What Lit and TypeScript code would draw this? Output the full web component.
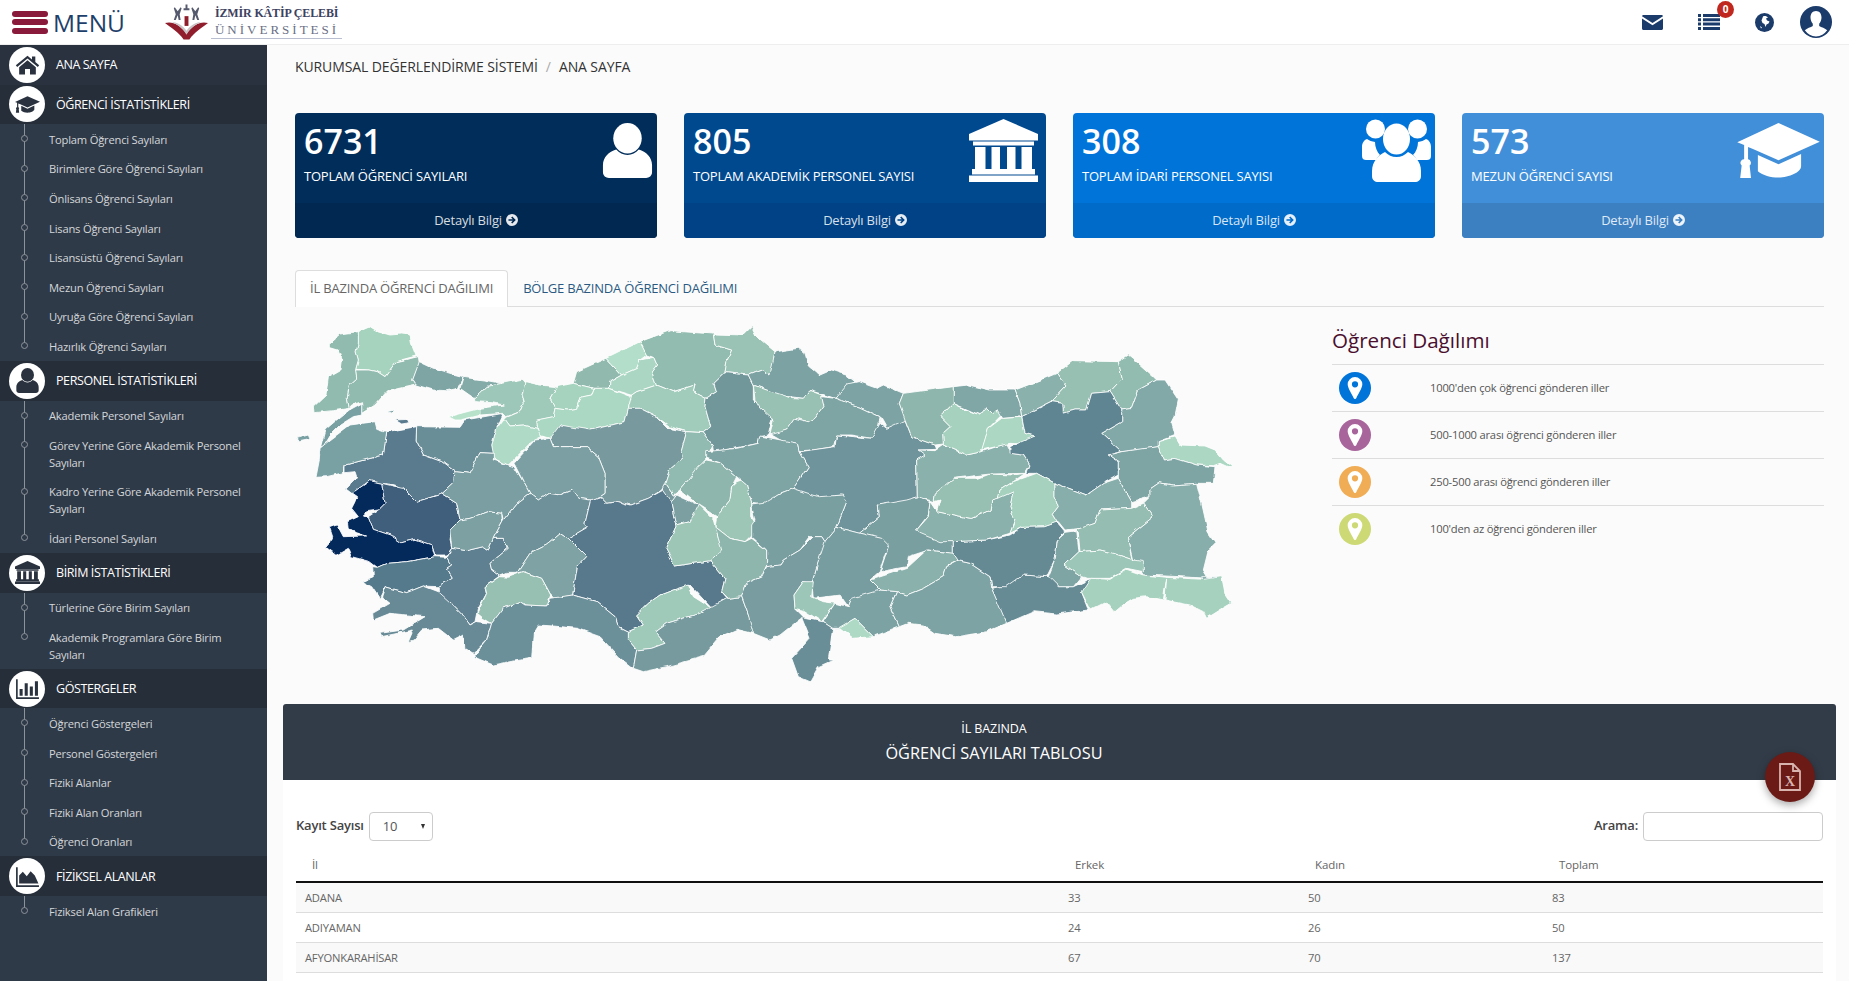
import { LitElement, css, html, svg } from "lit";
import { customElement } from "lit/decorators.js";

// icons, drawn for this page
const icons: Record<string, any> = {
  home: svg`<svg viewBox="0 0 24 24" class="ico"><path d="M12 3.5L.8 12.8l1.3 1.5L12 6.2l9.9 8.1 1.3-1.5-3.7-3.1V4.2h-3.2v2.9z"/><path d="M12 8L4 14.6V21.5h5.6v-5.3h4.8v5.3H20v-6.9z"/></svg>`,
  cap: svg`<svg viewBox="0 0 84 56" class="ico"><path d="M42 0L84 19 42 38 16 26.5 11 24.5V37a3.6 3.6 0 0 1 1.6 6.3L14 56H3l1.500-12.700A3.600 3.600 0 0 1 7 37V22.500L0 19.500z"/><path d="M21 32.500L42 42l23-10.500V44c0 6-12 11.500-23 11.500-8 0-16-2.500-21-6.500z"/></svg>`,
  user: svg`<svg viewBox="0 0 50 56" class="ico"><ellipse cx="25" cy="15.500" rx="14.500" ry="15.500"/><path d="M13.500 27C6 29 0 35 0 43v7c0 4 3 6 6 6h38c3 0 6-2 6-6v-7c0-8-6-14-13.500-16-3 3.500-7 5.500-11.500 5.500S16.500 30.500 13.500 27z"/></svg>`,
  bank: svg`<svg viewBox="0 0 69 63" class="ico"><path d="M34.500 0L69 15v6.500H0V15z"/><path d="M4 22.500h61v4H4zM6 28h10.500v24H6zM22.500 28h8.500v24h-8.500zM38 28h8.500v24H38zM52.500 28H63v24H52.500zM3 50h63v5.500H3zM0 56.500h69V63H0z"/></svg>`,
  group: svg`<svg viewBox="0 0 69 63" class="ico"><circle cx="13.500" cy="10" r="9.500"/><circle cx="55.500" cy="10" r="9.500"/><path d="M5 20c-3 1-5 4-5 8v9c0 3 2 4 4 4h10c2-3 3-4 4-5-3-3-5-8-5-13-3-.5-6-1.500-8-3zM64 20c3 1 5 4 5 8v9c0 3-2 4-4 4H55c-2-3-3-4-4-5 3-3 5-8 5-13 3-.5 6-1.500 8-3z"/><ellipse cx="34.500" cy="20" rx="13.500" ry="15.500"/><path d="M23 33c-6 3-13 9-13 19v5c0 4 3 6 6 6h37c3 0 6-2 6-6v-5c0-10-7-16-13-19-3 3-7 5-11.500 5S26 36 23 33z"/></svg>`,
  chart: svg`<svg viewBox="0 0 24 24" class="ico"><path d="M1 3h1.600v17.400H23V22H1z"/><path d="M5 12.500h3V19H5zM10 7h3v12h-3zM15 10h3v9h-3zM20 5h3v14h-3z" transform="translate(-.5 0) scale(.98 1)"/></svg>`,
  area: svg`<svg viewBox="0 0 24 24" class="ico"><path d="M1 3h1.600v17.400H23V22H1z"/><path d="M4 18.800V11l3.500-3.500 3.800 4.200L15 7l4 4 3.500 7.800z"/></svg>`,
  arrow: svg`<svg viewBox="0 0 14 14" class="arrow"><path fill-rule="evenodd" d="M7 0a7 7 0 1 0 0 14A7 7 0 0 0 7 0zM7.300 2.900l4.100 4.100-4.100 4.100-1.300-1.300 1.900-1.900H2.900V6.100h5L6 4.200z"/></svg>`,
  pin: svg`<svg viewBox="0 0 16 24" class="pin"><path fill-rule="evenodd" d="M8 0a8 8 0 0 0-8 8c0 4.500 5 11 6.500 15a1.600 1.600 0 0 0 3 0C11 19 16 12.500 16 8a8 8 0 0 0-8-8zm0 4.600A3.400 3.400 0 1 1 8 11.400 3.400 3.400 0 0 1 8 4.600z"/></svg>`,
};

interface Prov { f: string; p: string }

// western half, traced in a 3x grid of the map area
const west: Prov[] = [
  { f: "#789a9f", p: "1115,500 1125,490 1150,525 1160,525 1145,548 1120,512" },
  { f: "#a6d3be", p: "205,35 240,20 265,35 300,45 335,42 360,45 365,75 378,108 340,118 318,125 300,150 285,170 262,155 240,150 197,148 205,120 198,95 205,70" },
  { f: "#92bbaf", p: "118,70 150,42 205,35 205,70 198,95 205,120 197,148 200,175 178,195 172,235 178,265 130,272 75,278 73,258 108,225 115,170 150,150 155,115 145,90 118,82" },
  { f: "#92bbaf", p: "197,150 240,150 262,155 285,170 300,150 318,125 385,110 388,130 368,180 378,195 330,205 290,215 255,255 215,280 215,245 185,255 178,265 172,235 178,195 200,175" },
  { f: "#79a0a3", p: "215,250 215,285 190,290 150,315 120,345 100,378 92,380 105,330 140,300 178,270" },
  { f: "#7ea4a4", p: "388,125 430,145 480,160 520,170 505,205 470,212 430,210 378,195 368,180" },
  { f: "#84aba8", p: "520,172 580,180 635,190 590,200 570,220 553,235 510,205" },
  { f: "#b9e2cb", p: "475,290 570,265 570,285 510,300 495,300" },
  { f: "#9dc7b8", p: "553,235 570,220 590,200 635,190 695,178 705,190 695,230 700,250 690,275 650,290 640,280 570,285 570,265 640,255 610,248 555,245" },
  { f: "#9fc9b9", p: "705,185 750,195 800,200 780,235 795,265 790,290 745,300 740,325 700,315 660,318 643,295 690,275 700,250 695,230" },
  { f: "#91b9ad", p: "850,190 860,155 948,115 995,165 960,185 958,205 912,205" },
  { f: "#a6d3be", p: "800,200 850,190 912,205 905,225 870,232 860,265 835,270 795,265 780,235" },
  { f: "#b3dec9", p: "948,115 1050,65 1070,105 1050,120 1040,145 995,165" },
  { f: "#abd6c3", p: "995,165 1040,145 1050,120 1090,112 1100,135 1085,155 1100,195 1040,215 1025,225 958,205 960,185" },
  { f: "#abd8c3", p: "912,205 958,205 1025,230 1015,265 1005,305 965,315 900,330 850,325 810,315 790,350 780,355 745,345 740,300 790,290 795,265 835,270 860,265 870,232 905,225" },
  { f: "#93bcb0", p: "1050,65 1140,32 1270,42 1275,75 1325,90 1310,125 1305,158 1272,190 1280,215 1248,235 1210,215 1215,195 1150,215 1100,195 1085,155 1100,135 1090,112 1070,105" },
  { f: "#9ac3b5", p: "1270,42 1360,45 1385,20 1400,50 1455,95 1450,140 1440,165 1415,150 1375,165 1305,158 1310,125 1325,90 1275,75" },
  { f: "#a1ccbb", p: "1025,225 1040,215 1100,195 1150,215 1215,195 1210,215 1248,235 1245,260 1262,320 1240,338 1190,335 1140,320 1100,290 1050,265 1015,265" },
  { f: "#789a9f", p: "1015,265 1050,265 1100,290 1135,325 1190,335 1175,390 1180,410 1140,445 1125,490 1115,510 1075,535 1020,555 985,545 950,550 930,530 945,520 945,460 925,410 890,380 790,380 780,355 810,315 900,330 965,315 1005,305" },
  { f: "#afdbc6", p: "643,295 660,318 700,315 740,325 755,350 725,365 700,390 655,435 610,415 605,375 620,325" },
  { f: "#6a8e97", p: "380,320 510,322 525,300 640,280 620,325 605,375 610,400 570,398 540,460 495,455 455,425 400,405 378,360" },
  { f: "#5a7b8e", p: "290,335 380,320 378,360 400,405 455,425 495,455 490,490 455,522 380,545 340,510 315,495 275,490 240,482 185,520 165,505 200,470 195,455 165,458 165,435 230,418 280,405 285,370" },
  { f: "#79a0a3", p: "90,385 120,360 180,315 255,305 260,325 290,335 285,370 280,405 230,418 165,435 160,458 110,470 78,472 88,420" },
  { f: "#79a0a3", p: "18,355 55,345 60,358 25,365" },
  { f: "#5a7b8e", p: "315,300 355,298 360,308 335,312" },
  { f: "#79a0a3", p: "290,275 315,270 305,280" },
  { f: "#3f5f7c", p: "275,490 340,505 380,545 455,522 500,550 510,600 485,625 480,660 485,685 470,705 435,705 425,675 375,658 335,668 300,645 250,628 235,590 265,570 285,550 280,520" },
  { f: "#042a5c", p: "185,520 240,482 275,490 280,520 285,550 265,570 230,575 220,585 235,590 250,628 300,645 335,668 375,658 425,675 435,710 350,725 290,730 262,742 240,725 185,710 175,685 140,705 105,680 120,672 128,650 118,620 140,612 160,650 230,648 175,630 172,605 205,590 185,565 195,545 200,530" },
  { f: "#557a8c", p: "262,742 290,730 350,725 435,710 470,712 485,735 470,745 487,775 445,800 400,798 350,818 285,800 268,835 245,800 215,785 250,770 248,740" },
  { f: "#5f8090", p: "485,685 530,692 580,680 595,690 610,655 640,655 655,685 600,730 605,750 628,768 585,800 590,820 562,870 555,905 540,915 515,880 490,855 445,825 445,800 487,775 470,745 485,735 470,712" },
  { f: "#678a96", p: "285,800 350,818 400,798 445,815 490,855 515,880 540,915 560,905 605,910 590,960 550,1000 525,985 520,945 490,960 445,925 395,930 370,960 355,965 370,930 275,950 270,940 340,930 405,890 350,885 300,880 250,900 248,880 300,850 275,830" },
  { f: "#7a9ea1", p: "570,398 610,400 610,420 655,435 672,440 700,485 720,520 680,550 640,600 635,580 595,575 540,595 510,600 500,550 455,522 490,490 495,455 540,460" },
  { f: "#7da1a3", p: "510,600 540,595 595,575 635,580 637,605 610,655 595,690 580,680 530,692 485,685 480,630" },
  { f: "#7b9fa2", p: "672,430 735,360 780,355 790,380 890,380 925,410 945,460 945,520 930,530 905,540 870,535 845,510 810,525 775,520 745,540 720,520 700,485" },
  { f: "#6f929a", p: "720,520 745,540 775,520 810,525 845,510 870,535 902,540 885,610 895,620 835,655 812,640 770,675 720,700 680,760 650,760 628,768 605,750 600,730 655,685 640,655 610,655 640,600 680,550" },
  { f: "#7fa3a4", p: "812,640 835,655 890,710 862,740 848,825 795,835 780,820 755,775 700,755 680,760 720,700 770,675" },
  { f: "#97c0b2", p: "700,755 755,775 782,825 770,858 705,855 690,845 640,865 605,910 580,895 562,880 590,820 585,800 628,770 655,772" },
  { f: "#58798b", p: "902,540 930,530 950,550 985,545 1020,555 1075,535 1120,510 1145,545 1160,615 1128,685 1155,738 1260,722 1305,775 1295,815 1312,835 1265,865 1200,795 1150,810 1110,825 1075,850 1040,885 1060,915 1015,935 985,920 975,890 920,845 848,825 862,740 890,710 835,655 895,620 885,610" },
  { f: "#9fc9b9", p: "1040,885 1075,850 1110,825 1150,810 1195,795 1210,830 1265,865 1230,880 1130,910 1095,935 1125,970 1085,985 1040,990 1015,960 1015,935 1060,915" },
  { f: "#6c909a", p: "605,910 640,865 690,845 705,855 770,858 782,835 848,825 920,845 975,890 985,920 1015,935 1015,960 1040,990 1030,1045 985,1010 930,950 860,925 790,918 745,915 730,940 725,1015 660,1025 610,1035 550,1010 590,960" },
  { f: "#769a9e", p: "1040,990 1085,985 1125,970 1095,935 1130,910 1230,880 1312,835 1355,830 1375,885 1395,925 1390,940 1340,928 1290,950 1240,1010 1130,1040 1060,1055 1030,1045" },
  { f: "#7ca0a2", p: "1145,545 1160,525 1225,555 1225,590 1200,605 1160,615" },
  { f: "#9dc6b7", p: "1160,615 1200,605 1225,555 1270,600 1285,655 1300,690 1260,722 1155,738 1128,685" },
  { f: "#91bab0", p: "1190,335 1240,338 1268,375 1250,415 1170,510 1150,525 1125,490 1140,445 1180,410 1175,390" },
  { f: "#8fb6ac", p: "1248,420 1290,428 1340,470 1325,500 1320,540 1280,590 1225,555 1170,510 1195,480 1225,440" },
  { f: "#9dc6b7", p: "1340,485 1355,480 1370,495 1385,550 1385,590 1395,605 1390,640 1365,665 1320,655 1275,620 1280,590 1320,540 1325,500" },
  { f: "#8fb6ac", p: "1275,620 1320,655 1365,665 1385,655 1430,690 1430,735 1415,770 1370,790 1355,830 1315,835 1295,815 1305,775 1260,722 1295,690 1285,655" },
  { f: "#72979b", p: "1305,158 1375,165 1390,195 1390,240 1450,280 1435,345 1410,350 1405,370 1330,385 1270,395 1268,375 1240,338 1262,320 1245,260 1248,235 1280,215 1272,190" },
];

// eastern half, same grid, starts 1470 units further right
const east: Prov[] = [
  { f: "#7da2a3", p: "-95,165 -55,150 -30,165 -15,95 55,85 75,100 85,135 120,165 155,150 200,165 225,185 200,200 165,235 125,222 90,212 70,235 30,230 0,230 -40,210 -80,195" },
  { f: "#7ea3a4", p: "165,235 200,192 235,185 290,205 310,195 370,220 358,250 378,298 355,315 320,325 300,290 240,262" },
  { f: "#98c1b3", p: "-80,195 -40,210 30,232 70,235 90,212 125,225 132,260 105,295 85,305 45,295 20,330 -20,345 -30,345 -20,300 -60,265 -75,240" },
  { f: "#7fa4a4", p: "-30,345 20,330 45,295 85,305 105,295 132,260 125,230 165,235 240,262 300,290 295,325 275,355 215,345 170,345 160,380 100,390 60,392 55,370 10,365 -25,345" },
  { f: "#7fa4a4", p: "-220,395 -130,385 -65,370 -60,348 55,370 60,395 85,440 40,505 0,520 -50,555 -85,550 -100,495 -130,470 -180,428 -220,415" },
  { f: "#6f949b", p: "60,395 165,380 170,345 275,355 300,310 320,325 375,300 395,350 465,375 470,388 415,390 440,405 410,420 412,530 380,545 295,555 298,590 238,640 170,622 200,545 185,525 115,535 40,505 85,440" },
  { f: "#7a9fa1", p: "40,505 115,530 190,525 200,545 170,622 135,665 125,650 90,650 60,690 10,720 0,735 -40,740 -40,690 -85,650 -85,615 -75,600 -85,555 -50,550 0,520" },
  { f: "#7a9fa1", p: "238,640 298,590 295,555 380,540 415,530 450,545 445,585 410,630 470,655 520,665 520,700 445,690 385,710 380,740 300,755 325,680 300,655" },
  { f: "#789da0", p: "170,622 240,640 305,655 325,675 298,755 270,780 300,810 290,830 215,835 205,860 180,825 100,835 95,790 110,740 130,670" },
  { f: "#789ca0", p: "-40,740 0,735 10,720 60,690 100,650 125,650 135,665 110,740 95,790 70,785 42,825 45,865 70,890 50,905 0,945 -30,960 -80,940 -95,885 -115,830 -100,790 -55,770" },
  { f: "#9cc6b7", p: "70,785 100,785 95,830 130,845 165,850 125,905 70,870 45,865 42,825" },
  { f: "#7da2a3", p: "128,905 165,850 205,860 215,835 300,810 350,815 330,860 358,920 280,950 250,920 225,895 178,925 158,925" },
  { f: "#6a8e97", p: "65,893 128,905 158,925 145,1020 160,1020 115,1040 90,1085 55,1070 35,1015 90,955" },
  { f: "#aedac5", p: "178,922 225,895 250,920 280,950 220,955" },
  { f: "#8ab1ab", p: "270,780 380,745 440,690 520,700 535,720 500,740 490,770 430,805 380,825 350,815 300,810" },
  { f: "#7ea3a4", p: "350,815 380,825 430,805 490,770 500,740 535,722 570,730 630,770 635,805 665,870 680,910 620,935 530,950 465,940 430,915 385,910 358,920 330,860" },
  { f: "#678b95", p: "635,805 680,795 730,765 810,770 835,800 880,800 935,775 930,810 905,820 925,870 830,882 760,875 680,910" },
  { f: "#658a94", p: "520,665 620,660 690,645 725,622 790,620 830,605 855,635 832,660 825,720 800,770 730,765 680,800 635,800 630,770 570,730 535,722 520,700" },
  { f: "#8ab1ab", p: "450,545 470,575 575,595 630,570 635,540 700,515 690,560 705,600 690,640 620,660 520,665 480,665 420,640 410,630 445,590" },
  { f: "#97c0b2", p: "462,545 465,520 495,490 520,475 595,475 630,462 700,465 735,460 700,485 660,510 655,535 635,540 630,570 575,595 470,575 480,540" },
  { f: "#8ab1ab", p: "410,420 435,405 415,390 465,392 490,375 560,405 605,395 680,370 695,400 730,405 750,435 735,460 630,462 520,475 465,520 462,545 412,530" },
  { f: "#a5d1be", p: "480,290 520,250 560,270 600,285 620,260 640,280 650,270 665,285 625,325 605,395 560,405 490,375 488,340 510,320" },
  { f: "#abd7c3", p: "665,295 725,292 735,340 765,348 725,372 690,370 605,390 625,325" },
  { f: "#8fb6ac", p: "370,220 520,200 520,250 480,290 510,320 488,340 490,372 465,375 395,350 375,298 358,250" },
  { f: "#80a6a6", p: "520,200 565,195 630,210 705,210 720,250 725,290 665,295 650,270 640,280 620,260 600,285 555,265 520,250" },
  { f: "#8ab1ab", p: "705,210 770,185 830,160 858,198 815,245 725,290 720,250" },
  { f: "#97bfb2", p: "830,160 880,122 1015,125 1027,175 990,215 935,220 920,270 885,270 850,280 848,250 815,245 858,198" },
  { f: "#93bcb0", p: "1015,125 1045,105 1070,125 1115,165 1130,180 1075,210 1055,265 1025,270 990,215 1027,175" },
  { f: "#82a8a8", p: "1130,180 1155,180 1195,240 1185,290 1175,310 1185,345 1135,365 1135,380 1075,390 1025,395 965,340 1025,305 1025,270 1055,265 1075,210" },
  { f: "#abd7c3", p: "1135,365 1185,350 1200,375 1275,378 1305,390 1330,420 1355,440 1350,443 1320,430 1300,437 1250,435 1185,415 1150,420 1135,380" },
  { f: "#5f8592", p: "725,290 815,245 848,250 850,280 885,270 920,270 935,220 990,215 1025,270 1025,305 965,340 1025,395 985,405 1015,425 1015,465 970,490 920,525 880,510 825,490 770,460 740,460 750,435 730,405 690,400 690,380 765,348 735,340" },
  { f: "#7fa4a4", p: "1025,395 1135,380 1150,420 1185,415 1250,435 1305,440 1300,490 1250,490 1180,495 1135,488 1110,505 1110,530 1055,545 1015,475 1015,425 985,405" },
  { f: "#a5d1be", p: "700,485 770,460 825,490 825,530 835,560 820,580 835,605 790,620 725,622 690,640 705,600 690,560 700,515 655,535 660,510" },
  { f: "#87aeaa", p: "825,490 880,510 920,525 970,490 1015,475 1055,545 1055,565 960,570 945,610 905,625 855,630 835,605 820,580 835,560 825,530" },
  { f: "#95bdb1", p: "885,630 945,610 960,570 1055,565 1090,550 1120,590 1045,650 1055,700 1060,720 1000,700 960,690 900,695 895,640" },
  { f: "#87aeaa", p: "1110,505 1135,488 1180,495 1250,490 1265,550 1285,640 1305,670 1285,690 1270,750 1285,775 1200,770 1090,765 1060,715 1045,650 1120,590 1090,550 1110,530" },
  { f: "#7fa4a4", p: "1265,770 1315,770 1290,785 1270,780" },
  { f: "#7fa4a4", p: "855,640 890,635 897,695 855,735 905,770 880,800 835,800 805,770 825,720 832,660" },
  { f: "#9cc6b7", p: "897,695 960,690 1000,700 1060,720 1090,725 1090,755 1040,745 990,775 920,775 905,770 855,735" },
  { f: "#a5d1be", p: "905,820 935,775 990,778 1040,748 1090,765 1160,772 1150,840 1100,830 1060,835 1035,850 1005,875 980,845 930,870" },
  { f: "#a5d1be", p: "1160,772 1270,778 1325,770 1335,820 1355,850 1320,870 1280,895 1270,875 1230,855 1155,840" },
];

const menu = [
  {
    icon: "cap", title: "ÖĞRENCİ İSTATİSTİKLERİ",
    items: ["Toplam Öğrenci Sayıları", "Birimlere Göre Öğrenci Sayıları", "Önlisans Öğrenci Sayıları", "Lisans Öğrenci Sayıları", "Lisansüstü Öğrenci Sayıları", "Mezun Öğrenci Sayıları", "Uyruğa Göre Öğrenci Sayıları", "Hazırlık Öğrenci Sayıları"],
  },
  {
    icon: "user", title: "PERSONEL İSTATİSTİKLERİ",
    items: ["Akademik Personel Sayıları", "Görev Yerine Göre Akademik Personel Sayıları", "Kadro Yerine Göre Akademik Personel Sayıları", "İdari Personel Sayıları"],
  },
  {
    icon: "bank", title: "BİRİM İSTATİSTİKLERİ",
    items: ["Türlerine Göre Birim Sayıları", "Akademik Programlara Göre Birim Sayıları"],
  },
  {
    icon: "chart", title: "GÖSTERGELER",
    items: ["Öğrenci Göstergeleri", "Personel Göstergeleri", "Fiziki Alanlar", "Fiziki Alan Oranları", "Öğrenci Oranları"],
  },
  { icon: "area", title: "FİZİKSEL ALANLAR", items: ["Fiziksel Alan Grafikleri"] },
];

const cards = [
  { n: "6731", label: "TOPLAM ÖĞRENCİ SAYILARI", icon: "user", cls: "c1" },
  { n: "805", label: "TOPLAM AKADEMİK PERSONEL SAYISI", icon: "bank", cls: "c2" },
  { n: "308", label: "TOPLAM İDARİ PERSONEL SAYISI", icon: "group", cls: "c3" },
  { n: "573", label: "MEZUN ÖĞRENCİ SAYISI", icon: "cap", cls: "c4" },
];

const legend = [
  { cls: "l1", text: "1000'den çok öğrenci gönderen iller" },
  { cls: "l2", text: "500-1000 arası öğrenci gönderen iller" },
  { cls: "l3", text: "250-500 arası öğrenci gönderen iller" },
  { cls: "l4", text: "100'den az öğrenci gönderen iller" },
];

const rows = [
  ["ADANA", "33", "50", "83"],
  ["ADIYAMAN", "24", "26", "50"],
  ["AFYONKARAHİSAR", "67", "70", "137"],
];

@customElement("app-root")
export class AppRoot extends LitElement {
  static styles = css`
    :host {
      display: block;
      height: 981px;
      overflow: hidden;
      font-family: "Open Sans", sans-serif;
      background: #fbfbfb;
    }
    .topbar {
      height: 45px;
      box-sizing: border-box;
      background: #fff;
      border-bottom: 1px solid #eee;
      display: flex;
      align-items: center;
    }
    .burger {
      width: 36px;
      margin-left: 12px;
      display: flex;
      flex-direction: column;
      gap: 2.5px;
    }
    .burger i {
      display: block;
      height: 6px;
      border-radius: 3px;
      background: #8a1a3c;
    }
    .menu-word {
      margin-left: 5px;
      font-size: 24.5px;
      color: #1f3f6b;
      line-height: 45px;
    }
    .logo {
      display: flex;
      align-items: center;
      margin-left: 40px;
      gap: 3px;
    }
    .logo-mark { width: 43px; height: 36px; }
    .logo-text {
      border-bottom: 1px solid #b9bfd0;
      padding: 0 3px 0 4px;
      height: 34px;
      box-sizing: border-box;
    }
    .logo-a {
      font-family: "Liberation Serif", serif;
      font-weight: bold;
      font-size: 12px;
      line-height: 16px;
      letter-spacing: -0.15px;
      color: #3c4260;
      white-space: nowrap;
    }
    .logo-b {
      font-family: "Liberation Serif", serif;
      font-size: 13px;
      line-height: 17px;
      letter-spacing: 3px;
      color: #6a6f85;
      white-space: nowrap;
    }
    .top-icons {
      margin-left: auto;
      display: flex;
      align-items: center;
      height: 45px;
    }
    .top-icons svg { fill: #1b3b6b; display: block; }
    .env { width: 21px; height: 15px; margin-right: 35px; }
    .list-wrap { position: relative; margin-right: 35px; }
    .list { width: 22px; height: 16px; }
    .badge {
      position: absolute;
      left: 19px;
      top: -13px;
      width: 17px;
      height: 17px;
      border-radius: 50%;
      background: #c0281f;
      color: #fff;
      font-size: 10px;
      font-weight: 700;
      line-height: 17px;
      text-align: center;
    }
    .globe { width: 19px; height: 19px; margin-right: 26px; }
    .avatar { width: 32px; height: 32px; margin-right: 17px; }

    .layout { display: flex; height: 936px; }
    .side {
      width: 267px;
      flex: none;
      background: #2f3a48;
    }
    .head {
      height: 39.5px;
      display: flex;
      align-items: center;
      background: #262e3a;
      color: #fff;
      font-size: 12.5px;
      letter-spacing: -0.4px;
    }
    .head.home { background: #2a323f; }
    .circle {
      width: 36px;
      height: 36px;
      margin-left: 9px;
      margin-right: 11px;
      border-radius: 50%;
      background: #fff;
      display: flex;
      align-items: center;
      justify-content: center;
      flex: none;
    }
    .circle .ico { width: 25px; height: 25px; fill: #2a323f; }
    ul { list-style: none; margin: 0; padding: 0; }
    .sub li {
      position: relative;
      padding: 6.7px 15px 5.95px 49px;
      font-size: 11.2px;
      line-height: 17px;
      color: #d4d7da;
      letter-spacing: -0.2px;
    }
    .sub li::before {
      content: "";
      position: absolute;
      left: 24px;
      top: 0;
      bottom: 0;
      width: 1px;
      background: #8b929a;
    }
    .sub li:last-child::before { bottom: auto; height: 14px; }
    .sub li::after {
      content: "";
      position: absolute;
      left: 21px;
      top: 11px;
      width: 5px;
      height: 5px;
      border: 1px solid #8b929a;
      border-radius: 50%;
      background: #2f3a48;
    }

    .main {
      flex: 1;
      min-width: 0;
      padding: 12px 25px 0 28px;
      display: flex;
      flex-direction: column;
    }
    .crumb {
      line-height: 20px;
      font-size: 14px;
      color: #333;
      letter-spacing: -0.1px;
      display: flex;
      gap: 8px;
      margin-bottom: 36px;
    }
    .crumb span { color: #aaa; }
    .crumb b { font-weight: 400; color: #333; }
    .cards {
      display: grid;
      grid-template-columns: repeat(4, 362px);
      justify-content: space-between;
    }
    .card {
      height: 125px;
      border-radius: 4px;
      overflow: hidden;
      display: flex;
      flex-direction: column;
      color: #fff;
    }
    .c1 { background: #002d5a; --foot: #002850; }
    .c2 { background: #00498f; --foot: #004285; }
    .c3 { background: #0074d9; --foot: #006bc8; }
    .c4 { background: #428fd9; --foot: #3d80c2; }
    .card-top {
      flex: 1;
      display: flex;
      justify-content: space-between;
      padding: 6px 4px 0 9px;
    }
    .num {
      font-size: 34px;
      font-weight: 600;
      line-height: 45px;
    }
    .lab {
      font-size: 13px;
      line-height: 18px;
      margin-top: 3px;
      letter-spacing: -0.2px;
    }
    .card-ico { fill: #fff; }
    .card-ico .ico { display: block; fill: #fff; }
    .ci-user .ico { width: 51px; height: 55px; margin-top: 4px; }
    .ci-bank .ico { width: 69px; height: 63px; margin-right: 4px; }
    .ci-group .ico { width: 69px; height: 63px; }
    .ci-cap .ico { width: 83px; height: 55px; margin-top: 4px; }
    .foot {
      height: 35px;
      box-sizing: border-box;
      padding-bottom: 2px;
      background: var(--foot);
      display: flex;
      align-items: center;
      justify-content: center;
      gap: 4px;
      font-size: 13px;
      letter-spacing: -0.2px;
      color: rgba(255, 255, 255, 0.85);
    }
    .arrow { width: 12px; height: 12px; fill: rgba(255, 255, 255, 0.9); }

    .tabs {
      margin-top: 32px;
      display: flex;
      border-bottom: 1px solid #ddd;
      height: 37px;
      box-sizing: border-box;
    }
    .tab {
      font-size: 13px;
      letter-spacing: -0.2px;
      padding: 0 15px;
      line-height: 36px;
      color: #2a5a82;
      white-space: nowrap;
    }
    .tab.on {
      color: #666;
      background: #fff;
      border: 1px solid #ddd;
      border-bottom: 0;
      border-radius: 4px 4px 0 0;
      padding: 0 14px;
      height: 37px;
      line-height: 35px;
      box-sizing: border-box;
    }
    .map-row {
      display: flex;
      justify-content: space-between;
      margin-top: 13px;
      height: 370px;
    }
    .map { width: 955px; height: 370px; display: block; }
    .map polygon { stroke: #fff; stroke-width: 2.5; stroke-linejoin: round; }
    .legend { width: 492px; padding-top: 6px; }
    .legend h3 {
      margin: 0;
      font-size: 20.6px;
      font-weight: 500;
      line-height: 28px;
      padding-bottom: 10px;
      color: #4a0e2e;
    }
    .leg-row {
      height: 47px;
      box-sizing: border-box;
      border-top: 1px solid #ddd;
      display: flex;
      align-items: center;
      font-size: 11.2px;
      color: #555;
      letter-spacing: -0.2px;
    }
    .leg-row span { margin-bottom: 2px; }
    .dot {
      width: 32px;
      height: 32px;
      border-radius: 50%;
      margin-left: 7px;
      margin-right: 59px;
      display: flex;
      align-items: center;
      justify-content: center;
    }
    .pin { width: 16px; height: 22px; fill: #fff; }
    .l1 { background: #0074d9; }
    .l2 { background: #a8659c; }
    .l3 { background: #f0ad55; }
    .l4 { background: #cdd975; }

    .panel {
      margin: 14px -12px 0;
      position: relative;
      background: #fff;
      flex: 1;
    }
    .panel-head {
      height: 76px;
      background: #323c48;
      color: #fff;
      border-radius: 3px 3px 0 0;
      display: flex;
      flex-direction: column;
      align-items: center;
      justify-content: center;
      padding: 0 131px 3px 0;
      box-sizing: border-box;
    }
    .panel-head small { font-size: 12.5px; line-height: 24px; letter-spacing: -0.1px; }
    .panel-head strong { font-size: 16.3px; line-height: 24px; font-weight: 400; }
    .xls {
      position: absolute;
      right: 21px;
      top: 48px;
      width: 50px;
      height: 50px;
      border-radius: 50%;
      background: #6b1a15;
      box-shadow: 0 3px 8px rgba(0, 0, 0, 0.35);
      display: flex;
      align-items: center;
      justify-content: center;
    }
    .xls svg { width: 24px; height: 28px; }
    .panel-body { padding: 32px 13px 0; }
    .controls {
      display: flex;
      justify-content: space-between;
      align-items: center;
      height: 29px;
      font-size: 13px;
      font-weight: 600;
      color: #444;
      letter-spacing: -0.2px;
    }
    .ctl { display: flex; align-items: center; gap: 5px; }
    .ctl > span { margin-bottom: 3px; }
    .select {
      width: 64px;
      height: 29px;
      box-sizing: border-box;
      border: 1px solid #ccc;
      border-radius: 4px;
      display: flex;
      align-items: center;
      justify-content: space-between;
      padding: 0 7px 1px 13px;
      font-size: 13px;
      font-weight: 400;
      color: #555;
    }
    .caret {
      border-left: 2.5px solid transparent;
      border-right: 2.5px solid transparent;
      border-top: 5px solid #333;
    }
    .search {
      width: 180px;
      height: 29px;
      box-sizing: border-box;
      border: 1px solid #ccc;
      border-radius: 4px;
      background: #fff;
    }
    table {
      width: 100%;
      table-layout: fixed;
      border-collapse: collapse;
      font-size: 11.2px;
      color: #666;
      letter-spacing: -0.2px;
    }
    .w1 { width: 763px; }
    .w2 { width: 240px; }
    .w3 { width: 244px; }
    th {
      font-weight: 400;
      font-size: 11.5px;
      letter-spacing: -0.1px;
      text-align: left;
      height: 41px;
      box-sizing: border-box;
      padding: 7px 0 0 16px;
      border-bottom: 2px solid #111;
    }
    td {
      height: 30px;
      box-sizing: border-box;
      padding: 0 0 0 9px;
      border-bottom: 1px solid #ddd;
    }
    tbody tr:nth-child(odd) { background: #f9f9f9; }
  `;

  private renderMap() {
    return html`
      <svg class="map" viewBox="15 0 2865 1110">
        <filter id="rough" x="-2%" y="-2%" width="104%" height="104%" color-interpolation-filters="sRGB">
          <feTurbulence type="fractalNoise" baseFrequency="0.035" numOctaves="2" seed="4" />
          <feDisplacementMap in="SourceGraphic" scale="12" xChannelSelector="R" yChannelSelector="G" />
        </filter>
        <g filter="url(#rough)">
          ${west.map((s) => svg`<polygon fill=${s.f} points=${s.p}></polygon>`)}
          <g transform="translate(1470 0)">
            ${east.map((s) => svg`<polygon fill=${s.f} points=${s.p}></polygon>`)}
          </g>
        </g>
      </svg>
    `;
  }

  render() {
    return html`
      <div class="topbar">
        <div class="burger"><i></i><i></i><i></i></div>
        <div class="menu-word">MENÜ</div>
        <div class="logo">
          <svg class="logo-mark" viewBox="0 0 44 36">
            <path fill="#8f1d2c" d="M0 19c7-2 15 1 22 11 7-10 15-13 22-11-6 5-14 9-19 17h-6C14 28 6 24 0 19z" />
            <path fill="#c9c3c6" d="M6 18c6 0 12 3 16 9 4-6 10-9 16-9-6 2-12 6-16 13-4-7-10-11-16-13z" />
            <path fill="#555a6e" d="M10 3l3 4 3-4 1 1-2 6 1 6h-2l-1-5-2 5h-2l2-6-2-6zM28 3l3 4 3-4 1 1-2 6 2 6h-2l-2-5-1 5h-2l1-6-2-6z" />
            <path fill="#8f1d2c" d="M20 12h4v10h-4z" />
            <path fill="#555a6e" d="M19 4h6v2h-6zM21 0h2v4h-2z" />
          </svg>
          <div class="logo-text">
            <div class="logo-a">İZMİR KÂTİP ÇELEBİ</div>
            <div class="logo-b">ÜNİVERSİTESİ</div>
          </div>
        </div>
        <div class="top-icons">
          <svg class="env" viewBox="0 0 21 15"><path d="M1.500 0h18c.8 0 1.500.6 1.500 1.300L10.500 8 0 1.300C0 .6.700 0 1.500 0zM0 3.500l10.500 6.800L21 3.500V13.500c0 .8-.7 1.500-1.500 1.500h-18C.7 15 0 14.300 0 13.500z"/></svg>
          <div class="list-wrap">
            <svg class="list" viewBox="0 0 22 16"><path d="M0 0h3v3H0zM5 0h17v3H5zM0 4.300h3v3H0zM5 4.300h17v3H5zM0 8.600h3v3H0zM5 8.600h17v3H5zM0 13h3v3H0zM5 13h17v3H5z"/></svg>
            <div class="badge">0</div>
          </div>
          <svg class="globe" viewBox="0 0 19 19">
            <circle cx="9.500" cy="9.500" r="9.500" />
            <path fill="#fff" d="M8 3.500c2-1 4 0 5 1l-2 1 1 2 2.500 1-1 2-2 1-1 2.500-1-3-2-1-1-2.500zM5 13l2 1.500-1 1z" />
          </svg>
          <svg class="avatar" viewBox="0 0 32 32">
            <circle cx="16" cy="16" r="16" fill="#1b3b6b" />
            <path fill="#fff" d="M16 5c3.500 0 5.500 2.800 5.500 6.500 0 2.500-1 5-2.300 6.300v2.200c2 1.200 6 2.200 8 4.300A15 15 0 0 1 16 30.500 15 15 0 0 1 4.800 24.300c2-2.100 6-3.100 8-4.300v-2.200c-1.300-1.300-2.300-3.800-2.300-6.300C10.500 7.800 12.500 5 16 5z" />
          </svg>
        </div>
      </div>
      <div class="layout">
        <aside class="side">
          <div class="head home"><div class="circle">${icons.home}</div>ANA SAYFA</div>
          ${menu.map(
            (m) => html`
              <div class="head"><div class="circle">${icons[m.icon]}</div>${m.title}</div>
              <ul class="sub">${m.items.map((i) => html`<li>${i}</li>`)}</ul>
            `
          )}
        </aside>
        <main class="main">
          <div class="crumb"><b>KURUMSAL DEĞERLENDİRME SİSTEMİ</b><span>/</span><b>ANA SAYFA</b></div>
          <div class="cards">
            ${cards.map(
              (c) => html`
                <div class="card ${c.cls}">
                  <div class="card-top">
                    <div>
                      <div class="num">${c.n}</div>
                      <div class="lab">${c.label}</div>
                    </div>
                    <div class="card-ico ci-${c.icon}">${icons[c.icon]}</div>
                  </div>
                  <div class="foot">Detaylı Bilgi ${icons.arrow}</div>
                </div>
              `
            )}
          </div>
          <div class="tabs">
            <div class="tab on">İL BAZINDA ÖĞRENCİ DAĞILIMI</div>
            <div class="tab">BÖLGE BAZINDA ÖĞRENCİ DAĞILIMI</div>
          </div>
          <div class="map-row">
            ${this.renderMap()}
            <div class="legend">
              <h3>Öğrenci Dağılımı</h3>
              ${legend.map(
                (l) => html`<div class="leg-row"><div class="dot ${l.cls}">${icons.pin}</div><span>${l.text}</span></div>`
              )}
            </div>
          </div>
          <section class="panel">
            <div class="panel-head">
              <small>İL BAZINDA</small>
              <strong>ÖĞRENCİ SAYILARI TABLOSU</strong>
            </div>
            <div class="xls">
              <svg viewBox="0 0 24 28" fill="none" stroke="#d9b3ae" stroke-width="1.800">
                <path d="M2 1h13l7 7v19H2zM15 1v7h7" />
                <text x="7" y="23" font-family="Liberation Serif, serif" font-size="14" font-weight="700" fill="#d9b3ae" stroke="none">X</text>
              </svg>
            </div>
            <div class="panel-body">
              <div class="controls">
                <div class="ctl"><span>Kayıt Sayısı</span> <div class="select">10<span class="caret"></span></div></div>
                <div class="ctl"><span>Arama:</span> <div class="search"></div></div>
              </div>
              <table>
                <colgroup><col class="w1" /><col class="w2" /><col class="w3" /><col /></colgroup>
                <thead><tr><th>İl</th><th>Erkek</th><th>Kadın</th><th>Toplam</th></tr></thead>
                <tbody>
                  ${rows.map((r) => html`<tr>${r.map((c) => html`<td>${c}</td>`)}</tr>`)}
                </tbody>
              </table>
            </div>
          </section>
        </main>
      </div>
    `;
  }
}
